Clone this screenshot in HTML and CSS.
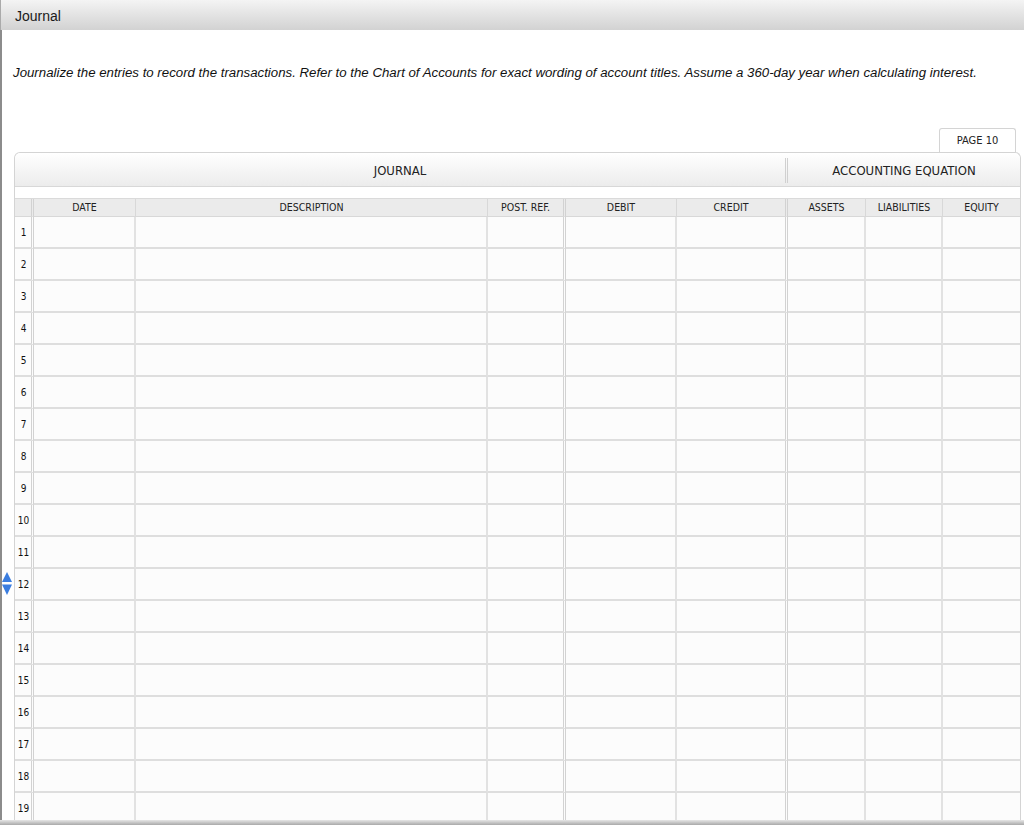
FILE: index.html
```html
<!DOCTYPE html>
<html>
<head>
<meta charset="utf-8">
<link rel="stylesheet" href="styles.css">
</head>
<body>
<div class="frame">
  <div class="titlebar">Journal</div>
  <div class="main">
    <p class="instr">Journalize the entries to record the transactions. Refer to the Chart of Accounts for exact wording of account titles. Assume a 360-day year when calculating interest.</p>
    <div class="tabrow"><div class="tab">PAGE 10</div></div>
    <div class="journal">
      <div class="jhead">
        <div class="jh-left">JOURNAL</div>
        <div class="jh-right">ACCOUNTING EQUATION</div>
      </div>
      <div class="spacer"></div>
      <div class="row head">
        <div class="c num"></div>
        <div class="c">DATE</div>
        <div class="c">DESCRIPTION</div>
        <div class="c dbl">POST. REF.</div>
        <div class="c">DEBIT</div>
        <div class="c dbl">CREDIT</div>
        <div class="c">ASSETS</div>
        <div class="c">LIABILITIES</div>
        <div class="c last">EQUITY</div>
      </div>
      <div id="body"></div>
    </div>
  </div>
  <div class="bottombar"></div>
</div>
<script src="script.js"></script>
</body>
</html>
```
FILE: script.js
```js
var body = document.getElementById('body');
var html = '';
for (var i = 1; i <= 19; i++) {
  var arrow = i === 12 ? '<svg class="arrows" width="10" height="23" viewBox="0 0 10 23"><polygon points="5,0 10,10 0,10" fill="#3a7de0"/><polygon points="0,12.5 10,12.5 5,23" fill="#3a7de0"/></svg>' : '';
  html += '<div class="row"><div class="c num">' + arrow + i + '</div><div class="c"></div><div class="c"></div><div class="c dbl"></div><div class="c"></div><div class="c dbl"></div><div class="c"></div><div class="c"></div><div class="c last"></div></div>';
}
body.innerHTML = html;
```
FILE: styles.css
```css
html, body {
  margin: 0;
  padding: 0;
  background: #fff;
}
.frame {
  height: 825px;
  display: flex;
  flex-direction: column;
  overflow: hidden;
  font-family: "Liberation Sans", Arial, sans-serif;
  color: #222;
}
.titlebar {
  height: 30px;
  flex: none;
  box-sizing: border-box;
  padding: 3px 0 0 14px;
  line-height: 27px;
  font-size: 14px;
  color: #1a1a1a;
  background: linear-gradient(#f4f4f4, #d2d2d2);
  border-left: 1px solid #aaa;
}
.main {
  flex: 1;
  min-height: 0;
  overflow: hidden;
  border-left: 2px solid #8c8c8c;
  padding: 0 0 0 12px;
}
.instr {
  margin: 35px 0 0 -1px;
  font-style: italic;
  font-size: 13.25px;
  line-height: 16px;
  color: #111;
  white-space: nowrap;
}
.tabrow {
  width: 1007px;
  display: flex;
  justify-content: flex-end;
  margin-top: 47px;
}
.tab {
  width: 77px;
  height: 24px;
  margin-right: 5px;
  box-sizing: border-box;
  border: 1px solid #d4d4d4;
  border-bottom: none;
  border-radius: 3px 3px 0 0;
  background: #fff;
  text-align: center;
  line-height: 23px;
  font-family: "DejaVu Sans Condensed", "DejaVu Sans", sans-serif;
  font-size: 11px;
}
.journal {
  width: 1007px;
  box-sizing: border-box;
  border: 1px solid #d4d4d4;
  border-bottom: none;
  border-radius: 6px 6px 0 0;
}
.jhead {
  height: 33px;
  display: grid;
  grid-template-columns: 773px 1fr;
  background: linear-gradient(#ffffff, #ececec);
  border-bottom: 1px solid #d8d8d8;
  border-radius: 6px 6px 0 0;
  font-family: "DejaVu Sans Condensed", "DejaVu Sans", sans-serif;
  font-size: 13px;
  color: #222;
}
.jh-left, .jh-right {
  display: flex;
  align-items: center;
  justify-content: center;
  padding-top: 1px;
}
.jh-left {
  border-right: 3px double #d0d0d0;
  margin: 5px 0 3px;
  padding-top: 0;
}
.spacer {
  height: 11px;
  background: #fff;
}
.row {
  display: grid;
  grid-template-columns: 19px 102px 352px 78px 111px 111px 78px 77px 77px;
  height: 32px;
}
.c {
  box-sizing: border-box;
  border-right: 2px solid #e2e2e2;
  border-bottom: 2px solid #dedede;
  background: #fcfcfc;
}
.c.dbl, .c.num {
  border-right: 3px double #d2d2d2;
}
.c.last {
  border-right: none;
}
.num {
  position: relative;
  display: flex;
  align-items: center;
  justify-content: center;
  font-family: "DejaVu Sans Condensed", "DejaVu Sans", sans-serif;
  font-size: 10px;
  color: #111;
  padding-left: 1px;
}
.arrows {
  position: absolute;
  left: -13px;
  top: 3px;
}
.row.head {
  height: 18px;
  border-top: 1px solid #dadada;
}
.row.head .c {
  background: #ebebeb;
  border-bottom: 1px solid #d8d8d8;
  border-right-color: #d8d8d8;
  border-right-width: 1px;
  text-align: center;
  font-family: "DejaVu Sans Condensed", "DejaVu Sans", sans-serif;
  font-size: 10.5px;
  line-height: 17px;
  color: #222;
}
.row.head .c.dbl, .row.head .c.num {
  border-right: 3px double #d2d2d2;
}
.row.head .c.last {
  border-right: none;
}
.bottombar {
  height: 5px;
  flex: none;
  background: linear-gradient(#e6e6e6, #a9a9a9);
}
```
